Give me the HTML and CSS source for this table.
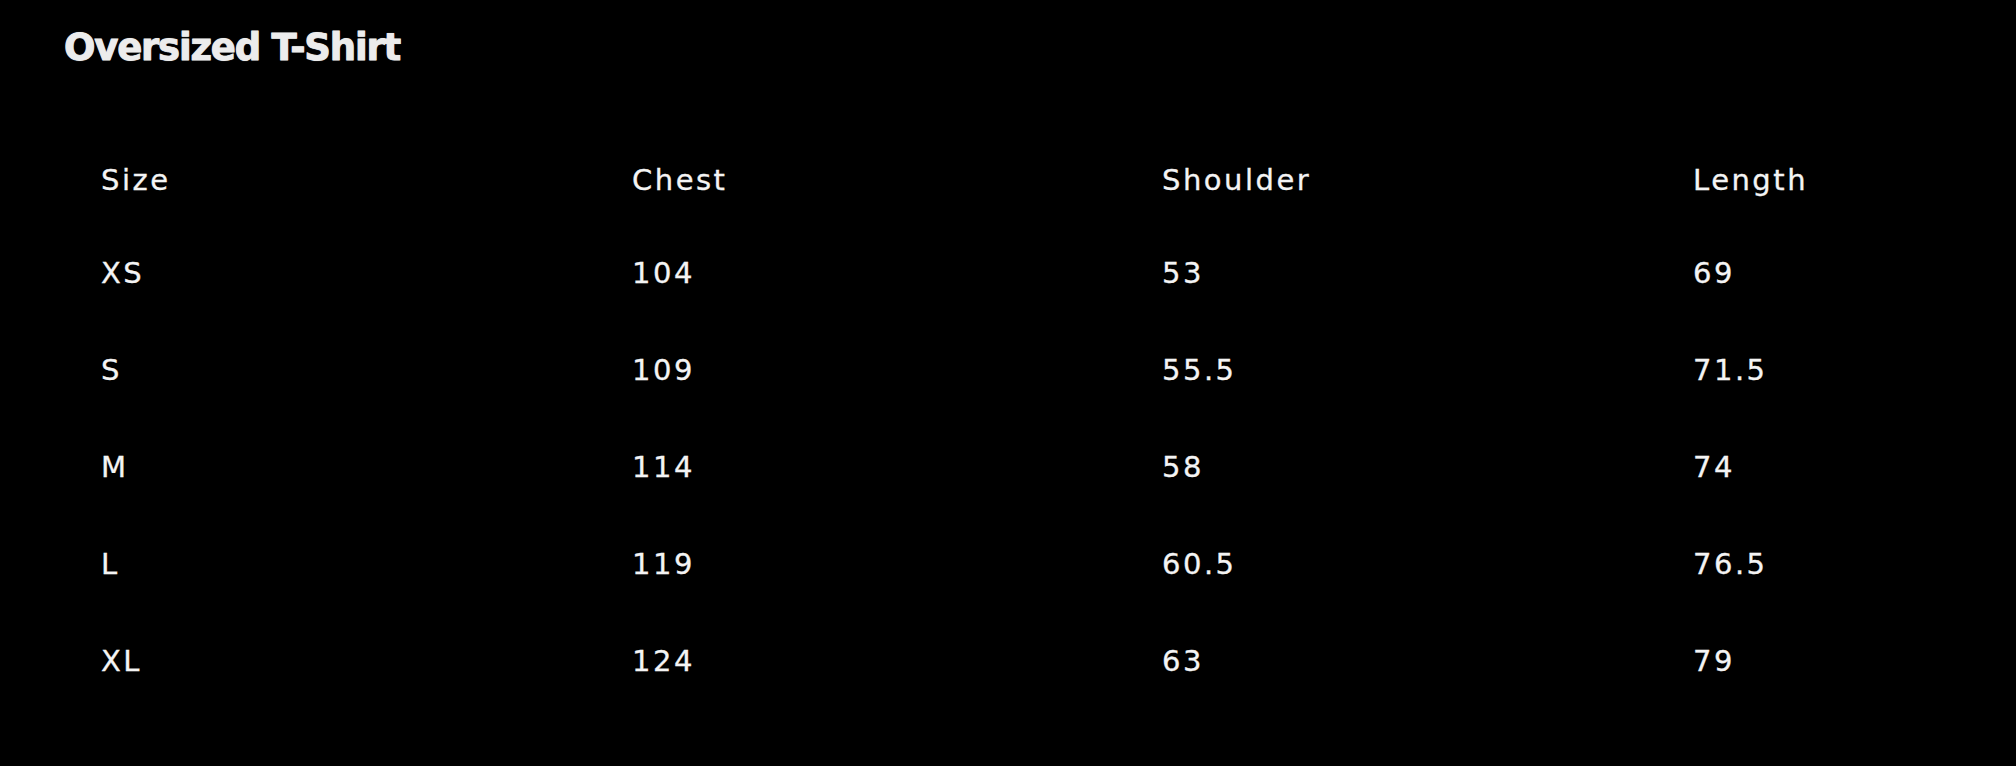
FILE: index.html
```html
<!DOCTYPE html>
<html lang="en">
<head>
<meta charset="utf-8">
<title>Oversized T-Shirt</title>
<link rel="stylesheet" href="styles.css">
</head>
<body>
<main class="sheet">
  <h1 class="title">Oversized T-Shirt</h1>
  <div class="chart">
    <div class="row head">
      <span>Size</span><span>Chest</span><span>Shoulder</span><span>Length</span>
    </div>
    <div class="row"><span>XS</span><span>104</span><span>53</span><span>69</span></div>
    <div class="row"><span>S</span><span>109</span><span>55.5</span><span>71.5</span></div>
    <div class="row"><span>M</span><span>114</span><span>58</span><span>74</span></div>
    <div class="row"><span>L</span><span>119</span><span>60.5</span><span>76.5</span></div>
    <div class="row"><span>XL</span><span>124</span><span>63</span><span>79</span></div>
  </div>
</main>
</body>
</html>
```
FILE: styles.css
```css
html, body {
  margin: 0;
  padding: 0;
  background: #000;
}
body {
  width: 2016px;
  height: 766px;
  overflow: hidden;
}
.sheet {
  padding: 28px 0 0 64px;
}
.title {
  margin: 0;
  font-family: "DejaVu Sans", sans-serif;
  font-weight: 700;
  font-size: 37px;
  line-height: 40px;
  letter-spacing: -1.2px;
  color: #ececec;
  -webkit-text-stroke: 0.8px #ececec;
  text-shadow: 0 0 1px #ccc;
}
.chart {
  margin-top: 94px;
  margin-left: 37px;
  display: flex;
  flex-direction: column;
  gap: 61px;
  font-family: "DejaVu Sans", sans-serif;
  font-size: 29px;
  line-height: 36px;
  letter-spacing: 2.5px;
  color: #f4f4f4;
  -webkit-text-stroke: 0.3px #f4f4f4;
}
.row {
  display: grid;
  grid-template-columns: 531px 530px 531px auto;
}
.row.head {
  margin-bottom: -4px;
}
```
